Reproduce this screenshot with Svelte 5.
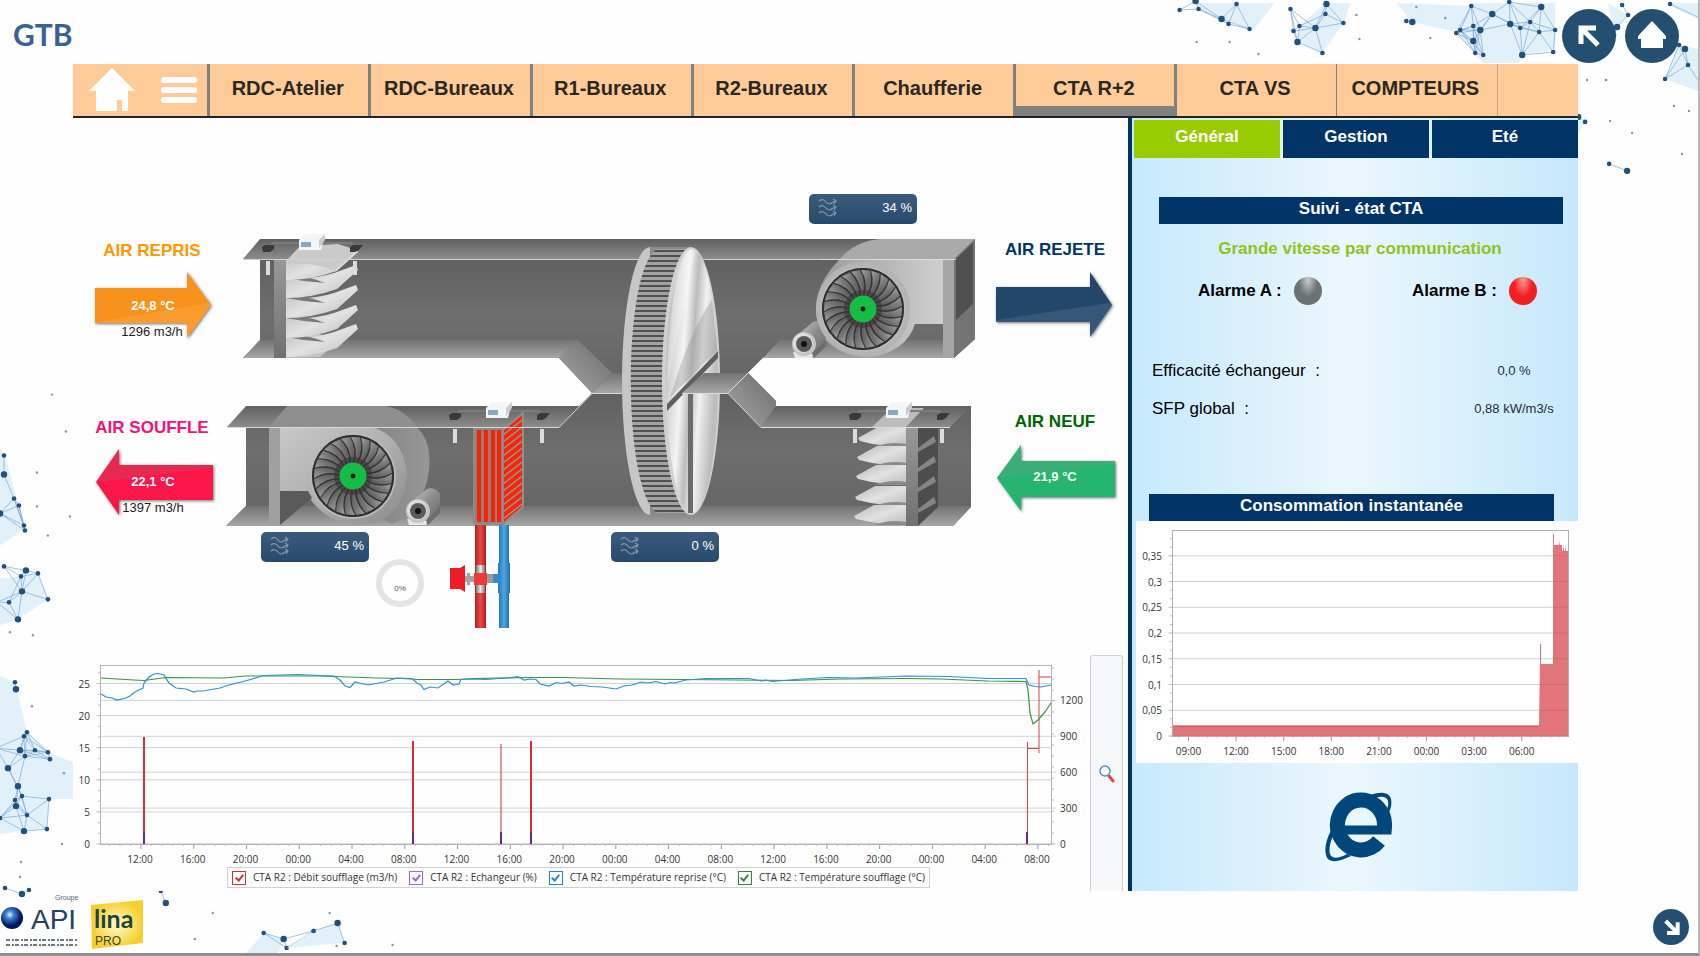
<script lang="ts">
  type Point = [number, number];

  interface Cluster {
    fill: string;
    reach: number;
    nodes: Point[];
  }

  interface Serie {
    id: string;
    label: string;
    color: string;
  }

  const zones = [
    "RDC-Atelier",
    "RDC-Bureaux",
    "R1-Bureaux",
    "R2-Bureaux",
    "Chaufferie",
    "CTA R+2",
    "CTA VS",
    "COMPTEURS",
  ];
  const tabs = ["Général", "Gestion", "Eté"];

  const series: Serie[] = [
    { id: "debit", label: "CTA R2 : Débit soufflage (m3/h)", color: "#d0303c" },
    { id: "echangeur", label: "CTA R2 : Echangeur (%)", color: "#a066c8" },
    { id: "reprise", label: "CTA R2 : Température reprise (°C)", color: "#1f87d0" },
    { id: "soufflage", label: "CTA R2 : Température soufflage (°C)", color: "#2f8a3c" },
  ];

  let activeZone = $state("CTA R+2");
  let activeTab = $state("Général");
  let visible = $state<Record<string, boolean>>({
    debit: true,
    echangeur: true,
    reprise: true,
    soufflage: true,
  });

  const clusters: Cluster[] = [
    {
      fill: "1197,4 1276,4 1255,31 1223,20 1200,10",
      reach: 36,
      nodes: [[1181, 11], [1197, 2], [1200, 10], [1238, 5], [1223, 20], [1230, 25], [1251, 30]],
    },
    {
      fill: "1327,4 1352,4 1345,24 1324,54 1299,43 1301,27",
      reach: 34,
      nodes: [[1292, 10], [1328, 5], [1327, 15], [1345, 24], [1317, 29], [1301, 27], [1295, 32], [1299, 43], [1324, 54]],
    },
    {
      fill: "1398,4 1473,7 1461,34 1414,23",
      reach: 20,
      nodes: [[1408, 22], [1414, 23]],
    },
    {
      fill: "1473,4 1557,4 1557,50 1524,56 1520,64 1485,64 1458,34",
      reach: 34,
      nodes: [
        [1473, 7], [1494, 15], [1511, 3], [1475, 27], [1482, 31], [1462, 31], [1458, 34], [1475, 42], [1477, 54],
        [1485, 56], [1512, 25], [1522, 29], [1532, 23], [1543, 8], [1541, 33], [1557, 31], [1524, 56], [1555, 53],
      ],
    },
    {
      fill: "1610,4 1630,16 1619,28 1616,36",
      reach: 22,
      nodes: [[1630, 16], [1619, 28], [1616, 36], [1624, 6]],
    },
    {
      fill: "1681,46 1700,50 1700,92 1667,80",
      reach: 38,
      nodes: [[1681, 46], [1687, 50], [1690, 66], [1667, 80], [1706, 90]],
    },
    { fill: "1672,4 1700,4 1700,20 1672,7", reach: 40, nodes: [[1672, 5], [1704, 20]] },
    { fill: "1578,120 1587,123 1578,138", reach: 22, nodes: [[1587, 123], [1580, 118]] },
    { fill: "", reach: 20, nodes: [[1611, 165], [1629, 172]] },
    {
      fill: "0,450 5,457 25,530 0,547",
      reach: 34,
      nodes: [[4, 457], [4, 476], [14, 500], [19, 507], [0, 515], [24, 527], [25, 532]],
    },
    {
      fill: "0,580 21,578 38,575 48,601 18,621 0,627",
      reach: 34,
      nodes: [[4, 568], [26, 572], [38, 575], [21, 578], [22, 593], [48, 601], [9, 604], [18, 621], [-3, 604]],
    },
    {
      fill: "0,678 15,684 27,734 50,755 73,764 73,801 49,801 47,831 24,833 0,836",
      reach: 32,
      nodes: [
        [15, 684], [16, 691], [27, 734], [24, 738], [20, 752], [35, 752], [25, 758], [8, 770], [48, 754], [50, 761],
        [18, 788], [22, 798], [15, 802], [16, 808], [27, 817], [49, 801], [24, 833], [47, 831], [0, 820], [-4, 750],
      ],
    },
    { fill: "", reach: 20, nodes: [[5, 890], [22, 896], [29, 892]] },
    { fill: "", reach: 16, nodes: [[161, 893], [166, 905]] },
    {
      fill: "264,935 284,941 278,956 246,956",
      reach: 34,
      nodes: [[264, 935], [284, 941], [314, 933], [287, 950]],
    },
    { fill: "314,933 338,925 345,945 287,950", reach: 26, nodes: [[314, 933], [338, 925], [345, 945]] },
  ];

  const specks: Point[] = [
    [1358, 16], [1361, 40], [1418, 8], [1447, 19], [1432, 39], [1231, 43], [1198, 43], [1260, 55], [1589, 81],
    [1608, 81], [1676, 107], [1691, 112], [1634, 134], [1612, 122], [1684, 155], [52, 396], [66, 433], [37, 474],
    [37, 508], [70, 518], [48, 537], [10, 634], [33, 637], [32, 708], [64, 775], [62, 846], [21, 864], [20, 879],
    [195, 941], [213, 915], [330, 915], [393, 947], [337, 948],
  ];

  function edges(c: Cluster): [Point, Point][] {
    const out: [Point, Point][] = [];
    c.nodes.forEach((a, i) => {
      c.nodes.slice(i + 1).forEach((b) => {
        if (Math.hypot(a[0] - b[0], a[1] - b[1]) < c.reach) out.push([a, b]);
      });
    });
    return out;
  }

  function range(n: number): number[] {
    return Array.from({ length: n }, (_, i) => i);
  }

  // trend chart
  const trendHours = range(18).map((i) => ({
    x: 141 + i * 52.76,
    label: `${String((12 + i * 4) % 24).padStart(2, "0")}:00`,
  }));
  const trendLeft = range(6).map((i) => ({ y: 844 - i * 32.1, label: String(i * 5) }));
  const trendRight = range(5).map((i) => ({ y: 844 - i * 35.9, label: String(i * 300) }));
  const peaks = [
    { x: 144, top: 737, w: 2 },
    { x: 413, top: 741, w: 2 },
    { x: 501, top: 744, w: 1 },
    { x: 531, top: 741, w: 2 },
  ];
  const reprise =
    "101,694 106,697 112,698 117,700 126,698 130,696 135,692 143,688 144,683 149,677 154,674 158,673.5 164,675 169,683 " +
    "176,688 186,689 194,692 197,691 203,691 220,688 229,685 245,681 259,677 263,675.5 299,674.5 320,675.5 334,676 " +
    "340,680 345,686 350,687.5 355,682 368,685 384,682 397,678 412,678.5 417,683 421,685 424,689.5 430,687 438,688 448,681 " +
    "453,685 459,684 461,679.5 474,679 486,679.5 499,678.5 508,678 518,676.5 524,680 530,679 536,679.5 540,684 549,686 556,682.5 " +
    "562,683.5 569,682 574,686 581,685 591,686.5 602,687 616,689 624,686 632,685 641,682 648,683 656,681.5 665,684 670,682.5 " +
    "674,683 686,680 706,678.5 749,678.5 761,681 766,680 772,681.5 795,679.5 827,677.5 856,678 906,676 949,676.5 988,678.5 " +
    "1026,678.5 1029,685 1035,686.5 1041,687 1051,685";
  const soufflage =
    "101,678 134,680 144,680.5 166,677.5 224,678 245,676 320,676 377,678 402,678.5 418,679.5 456,679.5 474,678.5 " +
    "531,677.5 563,677.5 620,679 684,679.5 791,680.5 841,679 906,678.5 941,679 988,681 1026,681.5 1028,690 1030,713 " +
    "1033,724 1038,720 1045,712 1051,703";

  // power chart
  const powerHours = range(8).map((i) => ({
    x: 1188.5 + i * 47.6,
    label: `${String((9 + i * 3) % 24).padStart(2, "0")}:00`,
  }));
  const powerScale = range(8).map((i) => ({
    y: 736 - i * 25.75,
    label: String(Math.round(i * 5) / 100).replace(".", ","),
  }));
  const powerArea =
    "1173,736 1173,726 1539,726 1540,660 1540,644 1541,644 1541,664 1553,664 1553,534 1554,534 1554,545 1559,545 1559,541 " +
    "1560,545 1562,545 1562,551 1563,551 1563,545 1564,551 1565,551 1565,545 1566,551 1568,551 1568,736";
</script>

{#snippet fan(x: number, y: number)}
  <g transform="translate({x} {y})">
    <circle r="43" fill="#b9b9b9" />
    <circle r="41" fill="#343232" />
    {#each range(24) as i}
      <path
        d="M1 -12 Q6 -26 -2 -39 L7 -38.5 Q11 -25 3 -12 Z"
        fill="url(#blade)"
        transform="rotate({i * 15})"
      />
    {/each}
    <circle r="40.5" fill="none" stroke="#2d2d2d" stroke-width="1" />
    <circle r="19" fill="#3a3135" opacity="0.6" />
    <circle r="13.5" fill="#14bd46" />
    <circle r="2.4" fill="#111" />
  </g>
{/snippet}

{#snippet motor(x: number, y: number)}
  <g transform="translate({x} {y})">
    <path d="M-9 14 L-11 8 L10 7 L8 14 Z" fill="#e6e6e6" />
    <path d="M-9 -7 L9 -22 Q17 -25 22 -17 L22 -6 L8 10 Z" fill="url(#cylinder)" />
    <path d="M10 14 L22 2 L22 -4 L8 9 Z" fill="#6c6c6c" />
    <circle r="12" fill="#c4c4c4" />
    <circle cx="-1" cy="-1" r="10" fill="#dedede" />
    <circle r="8" fill="#5a5a5a" />
    <circle r="3" fill="#111" />
  </g>
{/snippet}

{#snippet sensor(x: number, y: number)}
  <g transform="translate({x} {y})">
    <path d="M-42 10 L-38 5 H40 L44 9" fill="none" stroke="#7c7c7c" stroke-width="2" />
    <path d="M-49 9 L-46 7 H-37 V11 L-41 14 H-48 Z" fill="#393939" />
    <path d="M39 9 L42 7 H52 L48 12 L44 14 H39 Z" fill="#393939" />
    <rect x="-45" y="23" width="4" height="14" fill="#dcdcdc" />
    <rect x="42" y="23" width="4" height="14" fill="#dcdcdc" />
    <path d="M-12 2 L-6 -4 H14 L10 12 H-12 Z" fill="#f3f5f6" />
    <path d="M8 2 L14 -4 V2 L8 10 Z" fill="#c8cccf" />
    <rect x="-10" y="4" width="10" height="5" fill="#86a9c6" />
  </g>
{/snippet}

{#snippet speedBadge(x: number, y: number, text: string)}
  <g transform="translate({x} {y})">
    <rect width="108" height="30" rx="5" fill="url(#badge)" />
    {#each [7, 13, 19] as wy}
      <path
        d="M10 {wy} q4 -3 7 1 t7 0 l3 -1 m-3 -2 l3 2 l-2 3"
        fill="none"
        stroke="#8497a9"
        stroke-width="1.2"
      />
    {/each}
    <text x="103" y="18" text-anchor="end" class="value light">{text}</text>
  </g>
{/snippet}

<div class="page">
  <svg class="network" viewBox="0 0 1700 956" preserveAspectRatio="xMidYMid slice" aria-hidden="true">
    {#each clusters as cluster}
      {#if cluster.fill}
        <polygon points={cluster.fill} fill="#e2f0f9" />
      {/if}
      {#each edges(cluster) as [a, b]}
        <line x1={a[0]} y1={a[1]} x2={b[0]} y2={b[1]} stroke="#7fa9d6" stroke-width="0.7" />
      {/each}
      {#each cluster.nodes as [x, y], i}
        <circle cx={x} cy={y} r={i % 3 === 1 ? 3.2 : 2.3} fill="#23507a" />
      {/each}
    {/each}
    {#each specks as [x, y]}
      <circle cx={x} cy={y} r="1.2" fill="#8796a3" />
    {/each}
  </svg>

  <header>
    <h1>GTB</h1>
    <div class="shortcuts">
      <a class="round" href="#retour" aria-label="Retour">
        <svg viewBox="0 0 54 54"><path d="M19 35 V19 H34 M20 20 L36 36" fill="none" stroke="#fff" stroke-width="5" /></svg>
      </a>
      <a class="round" href="#accueil" aria-label="Accueil">
        <svg viewBox="0 0 54 54"><path d="M27 12 L41 27 V30 H38 V39 H16 V30 H13 V27 Z" fill="#fff" /></svg>
      </a>
    </div>
  </header>

  <div class="console">
    <nav>
      <div class="home-cell">
        <a href="#home" aria-label="Page d'accueil">
          <svg width="46" height="44" viewBox="0 0 46 44">
            <path d="M23 0 L46 23 H39 V43 H33 V32 H28 V43 H7 V23 H0 Z" fill="#fff" />
          </svg>
        </a>
        <button class="menu" aria-label="Menu">
          <svg width="36" height="28" viewBox="0 0 36 28">
            <path d="M3 4 H33 M3 14 H33 M3 24 H33" stroke="#fff" stroke-width="6" stroke-linecap="round" />
          </svg>
        </button>
      </div>
      {#each zones as zone}
        <a
          class="zone"
          class:active={zone === activeZone}
          href="#{zone}"
          onclick={() => (activeZone = zone)}>{zone}</a
        >
      {/each}
      <span class="filler"></span>
    </nav>

    <div class="body">
      <main>
        <svg class="diagram" viewBox="73 118 1055 537" role="img" aria-label="Synoptique CTA R+2">
          <defs>
            <linearGradient id="wall" x1="0" y1="0" x2="0" y2="1">
              <stop offset="0" stop-color="#5c5c5c" />
              <stop offset="0.5" stop-color="#6e6e6e" />
              <stop offset="1" stop-color="#646464" />
            </linearGradient>
            <linearGradient id="roof" x1="0" y1="0" x2="0" y2="1">
              <stop offset="0" stop-color="#606060" />
              <stop offset="1" stop-color="#8c8c8c" />
            </linearGradient>
            <linearGradient id="floor" x1="0" y1="0" x2="0" y2="1">
              <stop offset="0" stop-color="#737373" />
              <stop offset="1" stop-color="#a6a6a6" />
            </linearGradient>
            <linearGradient id="slope" x1="0" y1="1" x2="1" y2="0">
              <stop offset="0" stop-color="#a8a8a8" />
              <stop offset="1" stop-color="#6a6a6a" />
            </linearGradient>
            <linearGradient id="housing" x1="0" y1="0" x2="1" y2="0">
              <stop offset="0" stop-color="#9a9a9a" />
              <stop offset="1" stop-color="#cfcfcf" />
            </linearGradient>
            <linearGradient id="housingLeft" x1="0" y1="0" x2="1" y2="1">
              <stop offset="0" stop-color="#c8c8c8" />
              <stop offset="0.5" stop-color="#b0b0b0" />
              <stop offset="1" stop-color="#8a8a8a" />
            </linearGradient>
            <linearGradient id="volute" x1="0" y1="0" x2="1" y2="0">
              <stop offset="0" stop-color="#7c7c7c" />
              <stop offset="1" stop-color="#979797" />
            </linearGradient>
            <linearGradient id="blade" x1="0" y1="0" x2="1" y2="1">
              <stop offset="0" stop-color="#a0a0a0" />
              <stop offset="1" stop-color="#484848" />
            </linearGradient>
            <linearGradient id="cylinder" x1="0" y1="0" x2="1" y2="1">
              <stop offset="0" stop-color="#d0d0d0" />
              <stop offset="0.5" stop-color="#8c8c8c" />
              <stop offset="1" stop-color="#6a6a6a" />
            </linearGradient>
            <linearGradient id="disc" x1="0" y1="0" x2="1" y2="0.35">
              <stop offset="0" stop-color="#8f8f8f" />
              <stop offset="0.2" stop-color="#d2d2d2" />
              <stop offset="0.42" stop-color="#f4f4f4" />
              <stop offset="0.58" stop-color="#bcbcbc" />
              <stop offset="0.75" stop-color="#f1f1f1" />
              <stop offset="1" stop-color="#bdbdbd" />
            </linearGradient>
            <linearGradient id="bag" x1="0" y1="0" x2="1" y2="1">
              <stop offset="0" stop-color="#b8b8b8" />
              <stop offset="0.5" stop-color="#e2e2e2" />
              <stop offset="1" stop-color="#bcbcbc" />
            </linearGradient>
            <linearGradient id="frame" x1="0" y1="0" x2="0" y2="1">
              <stop offset="0" stop-color="#989898" />
              <stop offset="1" stop-color="#707070" />
            </linearGradient>
            <linearGradient id="badge" x1="0" y1="0" x2="0" y2="1">
              <stop offset="0" stop-color="#3c5b7c" />
              <stop offset="1" stop-color="#274a6c" />
            </linearGradient>
            <linearGradient id="hot" x1="0" y1="0" x2="1" y2="0">
              <stop offset="0" stop-color="#b32020" />
              <stop offset="0.5" stop-color="#e84a48" />
              <stop offset="1" stop-color="#b01c1c" />
            </linearGradient>
            <linearGradient id="cold" x1="0" y1="0" x2="1" y2="0">
              <stop offset="0" stop-color="#2478b8" />
              <stop offset="0.5" stop-color="#4fa5e2" />
              <stop offset="1" stop-color="#2070b0" />
            </linearGradient>
            <linearGradient id="steel" x1="0" y1="0" x2="1" y2="0">
              <stop offset="0" stop-color="#777" />
              <stop offset="0.5" stop-color="#e8e8e8" />
              <stop offset="1" stop-color="#777" />
            </linearGradient>
            <pattern id="fins" width="5" height="5" patternUnits="userSpaceOnUse">
              <rect width="5" height="5" fill="#a2a2a2" />
              <rect width="5" height="2" fill="#4f4f4f" />
            </pattern>
            <pattern id="coil" width="20" height="7" patternUnits="userSpaceOnUse" patternTransform="translate(503 0) skewY(-38)">
              <rect width="20" height="7" fill="#f4260f" />
              <rect width="20" height="2" fill="#a58a80" />
            </pattern>
            <filter id="shade" x="-10%" y="-20%" width="120%" height="140%">
              <feDropShadow dx="1" dy="1" stdDeviation="1.5" flood-color="#333" flood-opacity="0.7" />
            </filter>
          </defs>

          <!-- upper duct -->
          <polygon
            points="260,239 975,239 975,339 954,358 763,358 728,393 592,393 559,358 243,358 260,340"
            fill="url(#wall)"
          />
          <polygon points="260,340 578,340 559,358 243,358" fill="url(#floor)" />
          <polygon points="578,340 612,373 592,393 559,358" fill="url(#slope)" />
          <polygon points="780,340 954,340 954,358 763,358" fill="url(#floor)" />
          <polygon points="612,373 748,373 728,393 592,393" fill="url(#floor)" />
          <polygon points="260,239 975,239 954,259 243,259" fill="url(#roof)" />

          <!-- lower duct -->
          <polygon
            points="246,406 579,406 592,393 728,393 748,373 776,401 776,406 971,406 971,507 953,526 226,526 246,506"
            fill="url(#wall)"
          />
          <polygon points="246,506 971,506 953,526 226,526" fill="url(#floor)" />
          <polygon points="246,406 579,406 559,427 227,427" fill="url(#roof)" />
          <polygon points="776,406 971,406 950,427 761,427" fill="url(#roof)" />
          <polygon points="748,373 776,401 776,406 761,427 728,393" fill="url(#slope)" />

          <!-- upper left filter -->
          <rect x="274" y="259" width="12" height="99" fill="url(#frame)" />
          <path d="M286 337 L320 334 L334 345 L320 357 L286 358 Z" fill="#c4c4c4" />
          {#each [337, 318, 298, 278, 260] as y, i}
            <path
              d="M286 {y} Q312 {y + 2} 334 {y - 5} L356 {y - 13} L358 {y - 8} L337 {y + 11} Q312 {y + 20} 286 {y +
                20} Z"
              fill="url(#bag)"
            />
            <path d="M286 {y} Q305 {y + 4} 325 {y + 5} Q304 {y - 4} 286 {y - 1} Z" fill="#7a7a7a" opacity={i < 4 ? 1 : 0} />
          {/each}
          <polygon points="288,259 300,246 338,244 357,250 335,270 310,264 288,264" fill="#cacaca" />
          <line x1="243" y1="259.500" x2="944" y2="259.500" stroke="#d0d0d0" />

          <!-- upper right fan -->
          <polygon points="954,259 975,239 975,339 954,358" fill="#747474" />
          <polygon points="956,259 973,243 973,304 956,320" fill="#505050" />
          <polygon points="943,259 954,259 954,358 943,358" fill="#a6a6a6" />
          <path d="M840 259 Q855 241 880 239 H975 L954 259 Z" fill="#aaa" />
          <path
            d="M840 259 H943 V324 H915 Q906 352 870 357 Q834 356 820 333 Q806 292 840 259 Z"
            fill="url(#housing)"
          />
          <line x1="820" y1="259.500" x2="956" y2="259.500" stroke="#dcdcdc" />
          {@render motor(804, 344)}
          <circle cx="863" cy="309" r="47" fill="#b4b4b4" />
          {@render fan(863, 309)}

          <!-- heat exchanger wheel -->
          <ellipse cx="650" cy="381" rx="28" ry="134" fill="#c6c6c6" />
          <rect x="650" y="247" width="41" height="268" fill="#8b8b8b" />
          <path d="M657 249 C622 270 622 490 657 513 H691 V249 Z" fill="url(#fins)" />
          <ellipse cx="691" cy="381" rx="29" ry="134" fill="#d0d0d0" />
          <ellipse cx="692" cy="381" rx="26" ry="132" fill="url(#disc)" />
          <path d="M668 380 L696 250 Q684 250 677 280 Q668 320 667 380 Z" fill="#fff" opacity="0.25" />
          <path d="M670 398 Q690 330 712 300 L717 350 Z" fill="#999" opacity="0.4" />
          <rect x="688" y="393" width="5" height="120" fill="#6b6b6b" />
          <path d="M667 404 L718 351 V358 L667 411 Z" fill="#5f5f5f" />
          <polygon points="682,393 704,373 748,373 728,393" fill="url(#floor)" />
          <path d="M592 393.500 H622 M682 393.500 H728 L761 427.500 H950 M728 393 L763 358" fill="none" stroke="#dcdcdc" />

          <!-- supply fan -->
          <path d="M269 427 L287 406 H385 Q405 409 416 427 Z" fill="#8f8f8f" />
          <path d="M345 427 H416 Q432 440 429 470 Q424 510 392 524 L350 500 Z" fill="url(#volute)" />
          <rect x="269" y="427" width="11" height="98" fill="#a0a0a0" />
          <path
            d="M280 427 H372 Q402 436 407 472 Q406 510 375 523 Q340 530 318 508 Q309 500 308 491 H280 Z"
            fill="url(#housingLeft)"
          />
          <polygon points="280,491 308,491 312,498 280,525" fill="#5a5a5a" />
          {@render fan(353, 476)}
          {@render motor(418, 511)}

          <!-- heating coil -->
          <polygon points="503,430 523,413 523,507 503,524" fill="url(#coil)" stroke="#8f8f8f" stroke-width="2" />
          <rect x="474" y="428" width="29" height="96" fill="#8d8178" stroke="#8c8c8c" stroke-width="2" />
          {#each [477, 484, 491, 497] as x}
            <rect {x} y="430" width="4" height="92" fill="#fb2008" />
          {/each}
          <path d="M227 427.500 H559 L592 393.500" fill="none" stroke="#d8d8d8" />

          <!-- hot and cold pipes with the three-way valve -->
          <rect x="475" y="525" width="11" height="103" fill="url(#hot)" />
          <rect x="499" y="525" width="10" height="103" fill="url(#cold)" />
          <path d="M498 563 H510 V593 H498 Z" fill="url(#cold)" />
          <rect x="487" y="574" width="13" height="9" fill="#9a9a9a" />
          <rect x="493" y="574" width="8" height="9" fill="#3489cb" />
          <rect x="476" y="565" width="9" height="28" fill="url(#steel)" />
          <rect x="474" y="573" width="13" height="12" fill="#ee3a36" />
          <path d="M464 576 H474 V582 H464 Z M467 573 H470 V585 H467 Z" fill="#a3a3a3" />
          <path d="M450 568 H460 L465 565 V592 L460 589 H450 Z" fill="#ee1c25" />

          <!-- lower right filter -->
          <polygon points="918,427 938,427 938,507 918,526" fill="#4d4d4d" />
          {#each [442, 462, 482, 503] as y}
            <polygon points="918,{y + 6} 934,{y - 6} 936,{y} 918,{y + 10}" fill="#858585" />
          {/each}
          <rect x="906" y="427" width="12" height="99" fill="url(#frame)" />
          <polygon points="906,427 924,408 892,408 872,427" fill="#bcbcbc" />
          {#each [427, 446, 465, 486, 505] as y, i}
            <path
              d="M{878 - i} {y} H906 V{y + 20} Q882 {y + 20} {860 - i} {y + 14} L{858 - i} {y + 11} Z"
              fill="url(#bag)"
            />
            <path d="M874 {y + 20} Q890 {y + 14} 906 {y + 17} V{y + 20} Z" fill="#8a8a8a" />
          {/each}
          <line x1="855" y1="427.500" x2="950" y2="427.500" stroke="#dcdcdc" />

          {@render sensor(311, 238)}
          {@render sensor(498, 406)}
          {@render sensor(898, 406)}

          {@render speedBadge(809, 194, "34 %")}
          {@render speedBadge(261, 532, "45 %")}
          {@render speedBadge(611, 532, "0 %")}

          <circle cx="400" cy="583" r="21" fill="none" stroke="#e4e4e4" stroke-width="6" />
          <text x="400" y="591" text-anchor="middle" class="tiny">0%</text>

          <!-- air streams -->
          <path d="M95 288 H187 V272 L211 305 L187 338 V323 H95 Z" fill="#f7931e" filter="url(#shade)" />
          <path d="M95 323 L208 303 L211 305 L187 338 V323 Z" fill="#ffb04d" opacity="0.35" />
          <path d="M996 287 H1090 V272 L1112 305 L1090 337 V322 H996 Z" fill="#22466a" filter="url(#shade)" />
          <path d="M996 320 L1109 303 L1112 305 L1090 337 V322 H996 Z" fill="#56708c" opacity="0.4" />
          <path d="M213 465 H119 V449 L96 482 L119 515 V500 H213 Z" fill="#fb1549" filter="url(#shade)" />
          <path d="M213 465 H119 V449 L96 482 L213 468 Z" fill="#c94560" opacity="0.4" />
          <path d="M1115 461 H1021 V445 L997 478 L1021 511 V497 H1115 Z" fill="#27b571" filter="url(#shade)" />
          <path d="M1115 461 H1021 V445 L997 478 L1115 464 Z" fill="#4da87c" opacity="0.5" />

          <g class="stream" text-anchor="middle">
            <text x="152" y="256" fill="#ff9800">AIR REPRIS</text>
            <text x="1055" y="255" fill="#003366">AIR REJETE</text>
            <text x="152" y="433" fill="#f5107c">AIR SOUFFLE</text>
            <text x="1055" y="427" fill="#006400">AIR NEUF</text>
          </g>
          <g text-anchor="middle">
            <text x="153" y="310" class="value light bold">24,8 °C</text>
            <text x="152" y="336" class="value">1296 m3/h</text>
            <text x="153" y="486" class="value light bold">22,1 °C</text>
            <text x="153" y="512" class="value">1397 m3/h</text>
            <text x="1055" y="481" class="value light bold">21,9 °C</text>
          </g>
        </svg>

        <div class="trend">
          <div class="trend-chart">
            <svg viewBox="73 655 1011 211" role="img" aria-label="Courbes CTA R2">
              {#each trendLeft as tick}
                <path d="M96 {tick.y} H1051" stroke="#d2d2d2" />
                <text x="90" y={tick.y + 4} text-anchor="end" class="axis">{tick.label}</text>
              {/each}
              {#each trendRight as tick}
                <path d="M101 {tick.y} H1056" stroke="#d2d2d2" />
                <text x="1060" y={tick.y + 4} class="axis">{tick.label}</text>
              {/each}
              {#each range(17) as i}
                <path d="M98 {844 - i * 10.7} H101 M1051 {844 - i * 11} h3" stroke="#bbb" />
              {/each}
              {#each trendHours as tick}
                <path d="M{tick.x} 844 v5" stroke="#999" />
                <text x={tick.x - 1} y="863" text-anchor="middle" class="axis">{tick.label}</text>
              {/each}
              {#each range(90) as i}
                <path d="M{109.500 + i * 10.55} 844 v2" stroke="#bbb" />
              {/each}
              <rect x="100.500" y="665.500" width="951" height="179" fill="none" stroke="#b4b4b4" />
              {#if visible.debit}
                {#each peaks as peak}
                  <path d="M{peak.x} 844 V{peak.top}" stroke="#cc3238" stroke-width={peak.w} />
                {/each}
                <path
                  d="M1027.500 844 V742 M1027.500 748.500 H1039 M1039 753 V670 M1039 677 H1051"
                  fill="none"
                  stroke="#d8444a"
                />
              {/if}
              {#if visible.echangeur}
                {#each [144, 413, 501, 531, 1027] as x}
                  <path d="M{x} 844 V832" stroke="#6b2590" stroke-width="2" />
                {/each}
              {/if}
              {#if visible.soufflage}
                <polyline points={soufflage} fill="none" stroke="#3c9147" stroke-width="1.2" />
              {/if}
              {#if visible.reprise}
                <polyline points={reprise} fill="none" stroke="#3190cf" stroke-width="1.2" />
              {/if}
            </svg>
            <div class="legend">
              {#each series as serie}
                <label for={serie.id}>
                  <input
                    id={serie.id}
                    type="checkbox"
                    bind:checked={visible[serie.id]}
                    style="color: {serie.color}"
                  />
                  {serie.label}
                </label>
              {/each}
            </div>
          </div>
          <button class="zoom" aria-label="Agrandir">
            <svg width="16" height="18" viewBox="0 0 16 18">
              <path d="M10 11 L14 16" stroke="#e84450" stroke-width="3" stroke-linecap="round" />
              <circle cx="6" cy="6" r="5" fill="#fff" stroke="#5b8fc9" stroke-width="1.500" />
            </svg>
          </button>
        </div>
      </main>

      <aside>
        <div class="tabs">
          {#each tabs as tab}
            <button class:active={tab === activeTab} onclick={() => (activeTab = tab)}>{tab}</button>
          {/each}
        </div>

        <h2 class="status-title">Suivi - état CTA</h2>
        <p class="mode">Grande vitesse par communication</p>
        <div class="alarms">
          <div class="alarm">Alarme A : <span class="led"></span></div>
          <div class="alarm">Alarme B : <span class="led on"></span></div>
        </div>
        <dl>
          <dt>Efficacité échangeur  :</dt>
          <dd>0,0 %</dd>
          <dt>SFP global  :</dt>
          <dd>0,88 kW/m3/s</dd>
        </dl>

        <h2 class="power-title">Consommation instantanée</h2>
        <svg class="power" viewBox="1136 521 442 242" role="img" aria-label="Consommation instantanée">
          {#each powerScale as tick}
            <path d="M1168 {tick.y} H1568" stroke="#d0d0d0" />
            <text x="1162" y={tick.y + 4} text-anchor="end" class="axis">{tick.label}</text>
          {/each}
          {#each range(24) as i}
            <path d="M1170 {736 - i * 8.58} h3" stroke="#bbb" />
          {/each}
          {#each range(41) as i}
            <path d="M{1179 + i * 9.52} 736 v2" stroke="#bbb" />
          {/each}
          {#each powerHours as tick}
            <path d="M{tick.x} 736 v5" stroke="#999" />
            <text x={tick.x} y="755" text-anchor="middle" class="axis">{tick.label}</text>
          {/each}
          <polygon points={powerArea} fill="#d64048" fill-opacity="0.72" />
          <path d="M1173 726 H1539" stroke="#b8404a" />
          <rect x="1172.500" y="530.500" width="396" height="206" fill="none" stroke="#b0b0b0" />
        </svg>

        <div class="browser">
          <a href="#web" aria-label="Navigateur">
            <svg width="70" height="70" viewBox="0 0 70 70">
              <g fill="none" stroke="#00477c">
                <path d="M61 38 A23.500 25 0 1 0 56 49" stroke-width="15" />
                <path d="M22 38 H68.500" stroke-width="9" />
              </g>
              <g fill="#00477c">
                <path d="M37 9 C50 -1 66 -2 68 7 C69 12 68 17 65 22 L63 20 C66 13 66 8 63 6 C58 3 50 6 45 10 Z" />
                <path d="M10 31 C17 17 28 8 42 5 L38 11 C28 15 18 22 10 31 Z" />
                <path d="M22 18 C8 34 0 52 3 63 C5 72 16 70 28 64 L24 62 C15 67 9 67 7 62 C5 56 9 44 14 36 Z" />
              </g>
            </svg>
          </a>
        </div>
      </aside>
    </div>
  </div>

  <footer>
    <svg width="150" height="60" viewBox="0 0 150 60" role="img" aria-label="API, lina PRO">
      <defs>
        <radialGradient id="globe" cx="0.400" cy="0.350">
          <stop offset="0" stop-color="#e8f4ff" />
          <stop offset="0.350" stop-color="#3f86d8" />
          <stop offset="1" stop-color="#04175e" />
        </radialGradient>
        <radialGradient id="sun">
          <stop offset="0" stop-color="#fffbd0" />
          <stop offset="1" stop-color="#f5cf2c" />
        </radialGradient>
      </defs>
      <circle cx="12" cy="27" r="11" fill="url(#globe)" />
      <text x="55" y="9" class="group">Groupe</text>
      <text x="31" y="38" class="api">API</text>
      <path d="M6 49 H77 M6 54 H77" stroke="#6c7787" stroke-width="2" stroke-dasharray="4 2 2 1" />
      <path d="M91 14 L143 9 V52 L92 58 Z" fill="url(#sun)" />
      <text x="94" y="37" class="lina">lina</text>
      <text x="95" y="54" class="pro">PRO</text>
    </svg>
    <a class="round small" href="#suite" aria-label="Suite">
      <svg viewBox="0 0 54 54"><path d="M37 20 V36 H21 M36 35 L19 18" fill="none" stroke="#fff" stroke-width="6" /></svg>
    </a>
  </footer>
</div>

<style>
  :global(body) {
    background: #fefefe;
  }

  .page {
    position: relative;
    display: flex;
    flex-direction: column;
    min-height: 100vh;
    box-sizing: border-box;
    overflow: hidden;
    border-right: 2px solid #b5b5b5;
    border-bottom: 3px solid #8e8e8e;
    font-family: "Liberation Sans", Arial, sans-serif;
    color: #000;
  }

  .network {
    position: absolute;
    inset: 0;
    width: 100%;
    height: 100%;
  }

  header {
    position: relative;
    display: flex;
    align-items: center;
    justify-content: space-between;
    padding: 9px 19px 1px 13px;
  }

  h1 {
    margin: 0;
    padding-bottom: 4px;
    font-family: Lato, sans-serif;
    font-size: 30px;
    line-height: 36px;
    font-weight: 700;
    color: #3a6094;
  }

  .shortcuts {
    display: flex;
    gap: 9px;
  }

  .round {
    display: block;
    width: 54px;
    height: 54px;
    border-radius: 50%;
    background: #244f70;
  }

  .round.small {
    width: 36px;
    height: 36px;
  }

  .round svg {
    display: block;
    width: 100%;
  }

  .console {
    position: relative;
    margin: 0 120px 0 73px;
    background: #fefefe;
  }

  nav {
    display: grid;
    grid-template-columns: 134fr repeat(8, 161fr) 81fr;
    height: 52px;
    background: #ffcc99;
    border-bottom: 2px solid #222;
  }

  .home-cell {
    display: flex;
    align-items: center;
    justify-content: space-between;
    padding: 0 10px 0 16px;
  }

  .home-cell svg {
    display: block;
  }

  button {
    margin: 0;
    padding: 0;
    border: 0;
    background: none;
    font-family: inherit;
    cursor: pointer;
  }

  .zone {
    display: flex;
    align-items: center;
    justify-content: center;
    padding: 0 3px 4px 0;
    border-left: 3px solid #808080;
    font-size: 20px;
    font-weight: 700;
    color: #2b2723;
    text-decoration: none;
    white-space: nowrap;
  }

  .zone:nth-last-child(2) {
    border-left-width: 1px;
  }

  .zone.active {
    box-shadow: inset 0 -10px #808080;
  }

  .filler {
    border-left: 1px solid #c9a583;
  }

  .body {
    display: grid;
    grid-template-columns: minmax(0, 1055fr) minmax(0, 450fr);
  }

  .diagram,
  .trend-chart svg,
  .power {
    display: block;
    width: 100%;
  }

  .stream {
    font-size: 17px;
    font-weight: 700;
  }

  .value {
    font-size: 13px;
    fill: #1c1c1c;
  }

  .value.light {
    fill: #fff;
  }

  .value.bold {
    font-weight: 700;
  }

  .tiny {
    font-size: 8px;
    fill: #555;
  }

  .axis {
    font-family: "Open Sans", "Noto Sans", sans-serif;
    font-size: 10px;
    fill: #333;
  }

  .trend {
    display: flex;
    gap: 6px;
    padding-right: 5px;
  }

  .trend-chart {
    flex: 1;
    min-width: 0;
    padding-bottom: 3px;
  }

  .legend {
    display: flex;
    justify-content: space-between;
    width: fit-content;
    gap: 12px;
    margin: 1px auto 0;
    padding: 0 4px;
    border: 1px solid #d0d0d0;
    font-family: "Open Sans", "Noto Sans", sans-serif;
    font-size: 10px;
    line-height: 19px;
    color: #333;
    white-space: nowrap;
  }

  .legend label {
    display: flex;
    align-items: center;
    gap: 7px;
  }

  .legend input {
    appearance: none;
    display: grid;
    place-items: center;
    width: 14px;
    height: 14px;
    margin: 0;
    border: 1px solid currentColor;
    background: #fff;
  }

  .legend input:checked::after {
    content: "";
    width: 3px;
    height: 6px;
    margin-bottom: 2px;
    border: solid currentColor;
    border-width: 0 2px 2px 0;
    transform: rotate(40deg);
  }

  .zoom {
    display: flex;
    align-items: center;
    justify-content: center;
    width: 33px;
    border: 1px solid #cfcfcf;
    border-bottom: 0;
    border-radius: 3px 3px 0 0;
    background: #f7f8fa;
  }

  aside {
    display: flex;
    flex-direction: column;
    border-left: 4px solid #003366;
    background: linear-gradient(90deg, #c6eafe, #dcf0fb 28%, #ebf7fd 48%, #dcf1fc 70%, #c6e8fb);
  }

  .tabs {
    display: grid;
    grid-template-columns: repeat(3, 1fr);
    gap: 3px;
    padding: 2px 0 0 2px;
  }

  .tabs button {
    height: 38px;
    padding-bottom: 5px;
    background: #003366;
    color: #fff;
    font-size: 17px;
    font-weight: 700;
  }

  .tabs button.active {
    background: #99cc00;
  }

  h2 {
    margin: 0;
    padding-bottom: 3px;
    background: #003366;
    color: #fff;
    font-size: 17px;
    line-height: 24px;
    font-weight: 700;
    text-align: center;
  }

  .status-title {
    margin: 39px 15px 0 27px;
  }

  .power-title {
    margin: 75px 24px 0 17px;
  }

  .mode {
    margin: 15px 0 0;
    padding-left: 10px;
    font-size: 17px;
    line-height: 20px;
    font-weight: 700;
    color: #8fc31c;
    text-align: center;
  }

  .alarms {
    display: flex;
    justify-content: space-between;
    margin-top: 18px;
    padding: 0 41px 0 66px;
  }

  .alarm {
    display: flex;
    align-items: center;
    gap: 12px;
    font-size: 17px;
    font-weight: 700;
  }

  .led {
    width: 28px;
    height: 28px;
    border-radius: 50%;
    background: radial-gradient(ellipse at 50% 10%, #c9cccd, #6d7172 48%);
  }

  .led.on {
    background: radial-gradient(ellipse at 50% 10%, #ff9a94, #f01f22 48%);
  }

  dl {
    display: grid;
    grid-template-columns: 1fr 128px;
    row-gap: 18px;
    margin: 56px 0 0;
    padding-left: 20px;
    line-height: 20px;
  }

  dt {
    font-size: 17px;
    white-space: pre;
  }

  dd {
    margin: 0;
    font-size: 13px;
    text-align: center;
    color: #1f2d36;
  }

  .power {
    box-sizing: border-box;
    width: auto;
    margin-left: 4px;
    background: #fff;
  }

  .browser {
    display: flex;
    flex: 1;
    align-items: center;
    justify-content: center;
    padding-left: 6px;
  }

  .browser svg {
    display: block;
  }

  footer {
    position: relative;
    display: flex;
    flex: 1;
    align-items: flex-start;
    justify-content: space-between;
    padding-right: 9px;
  }

  footer .round {
    margin-top: 18px;
  }

  .group {
    font-size: 7px;
    fill: #55606e;
  }

  .api {
    font-size: 28px;
    fill: #24405f;
  }

  .lina {
    font-family: Lato, sans-serif;
    font-size: 25px;
    font-weight: 700;
    fill: #1e4634;
  }

  .pro {
    font-size: 12px;
    fill: #3a4a20;
  }
</style>
